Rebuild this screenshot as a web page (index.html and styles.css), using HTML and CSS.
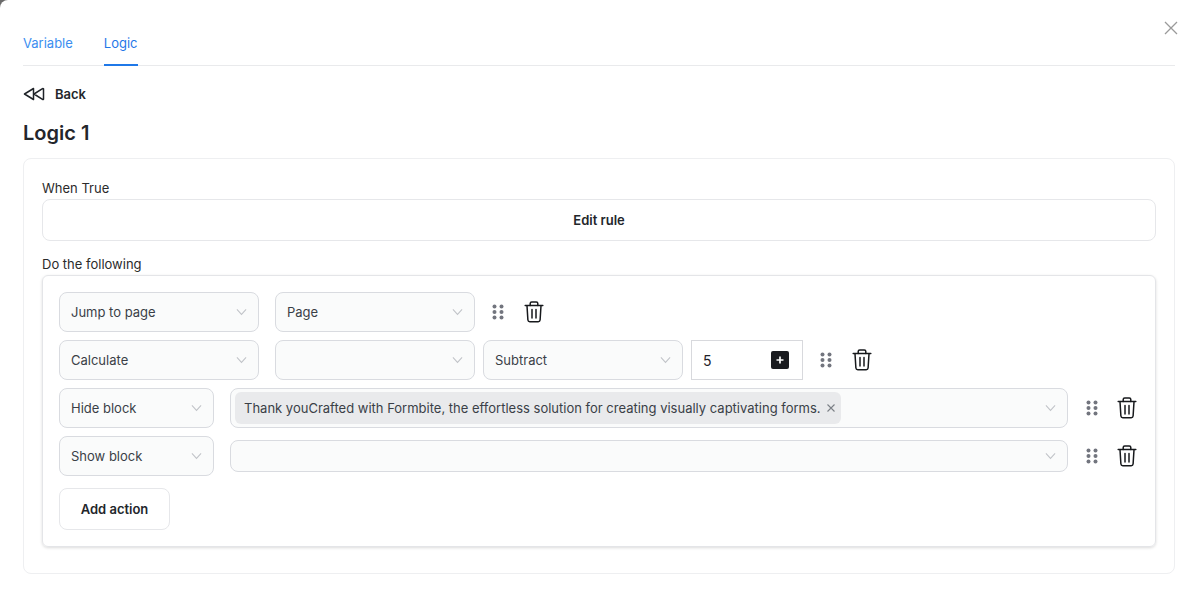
FILE: index.html
```html
<!DOCTYPE html>
<html lang="en">
<head>
<meta charset="utf-8">
<title>Logic</title>
<link rel="stylesheet" href="styles.css">
</head>
<body>
<svg width="0" height="0" class="defs">
  <defs>
    <symbol id="chev" viewBox="0 0 12 8"><path d="M1 1.2 6 6.6 11 1.2" fill="none" stroke="currentColor" stroke-width="1.1"/></symbol>
    <symbol id="grip" viewBox="0 0 12 16"><circle cx="2.5" cy="2.5" r="2"/><circle cx="9.5" cy="2.5" r="2"/><circle cx="2.5" cy="8" r="2"/><circle cx="9.5" cy="8" r="2"/><circle cx="2.5" cy="13.5" r="2"/><circle cx="9.5" cy="13.5" r="2"/></symbol>
    <symbol id="trash" viewBox="0 0 20 22"><g fill="none" stroke="currentColor" stroke-width="1.5" stroke-linecap="round" stroke-linejoin="round"><path d="M1.2 4.6h17.6"/><path d="M6.2 4.4V2.600c0-.9.6-1.500 1.500-1.500h4.600c.9 0 1.500.6 1.500 1.500v1.800"/><path d="M3 4.800l.9 14.200c.1 1 .8 1.800 1.900 1.800h8.400c1.100 0 1.800-.8 1.900-1.800L17 4.800"/><path d="M8 8.600v8.400M12 8.600v8.400"/></g></symbol>
  </defs>
</svg>
<main class="modal">
  <svg class="close" width="14" height="14" viewBox="0 0 14 14"><path d="M1 1l12 12M13 1L1 13" stroke="#9a9a9a" stroke-width="1.3" fill="none"/></svg>
  <nav class="tabs">
    <a class="tab">Variable</a>
    <a class="tab active">Logic</a>
  </nav>
  <div class="back">
    <svg width="22" height="14" viewBox="0 0 22 14"><g fill="none" stroke="#1f2328" stroke-width="1.5" stroke-linejoin="round"><path d="M10.500 1.500 1.500 7l9 5.500z"/><path d="M20.500 1.800c-.3-.3-.7-.3-1-.1L11 7l8.500 5.300c.3.200.7.200 1-.1z"/></g></svg>
    <span>Back</span>
  </div>
  <h1 class="title">Logic 1</h1>
  <section class="card">
    <div class="label">When True</div>
    <button class="edit">Edit rule</button>
    <div class="label second">Do the following</div>
    <div class="actions">
      <div class="row">
        <div class="sel w200"><span>Jump to page</span><svg class="chev"><use href="#chev"/></svg></div>
        <div class="sel w200"><span>Page</span><svg class="chev"><use href="#chev"/></svg></div>
        <svg class="grip"><use href="#grip"/></svg>
        <svg class="trash"><use href="#trash"/></svg>
      </div>
      <div class="row">
        <div class="sel w200"><span>Calculate</span><svg class="chev"><use href="#chev"/></svg></div>
        <div class="sel w200"><span></span><svg class="chev"><use href="#chev"/></svg></div>
        <div class="sel w200 tight"><span>Subtract</span><svg class="chev"><use href="#chev"/></svg></div>
        <div class="num tight"><span>5</span><i class="plus"><svg width="8" height="8" viewBox="0 0 8 8"><path d="M4 .5v7M.5 4h7" stroke="#fff" stroke-width="1.700"/></svg></i></div>
        <svg class="grip"><use href="#grip"/></svg>
        <svg class="trash"><use href="#trash"/></svg>
      </div>
      <div class="row">
        <div class="sel w155"><span>Hide block</span><svg class="chev"><use href="#chev"/></svg></div>
        <div class="multi">
          <span class="chip">Thank youCrafted with Formbite, the effortless solution for creating visually captivating forms.<svg width="8" height="8" viewBox="0 0 8 8"><path d="M.5.500l7 7M7.500.500l-7 7" stroke="#7b7f86" stroke-width="1.100" fill="none"/></svg></span>
          <svg class="chev"><use href="#chev"/></svg>
        </div>
        <svg class="grip wide"><use href="#grip"/></svg>
        <svg class="trash"><use href="#trash"/></svg>
      </div>
      <div class="row">
        <div class="sel w155"><span>Show block</span><svg class="chev"><use href="#chev"/></svg></div>
        <div class="multi empty"><svg class="chev"><use href="#chev"/></svg></div>
        <svg class="grip wide"><use href="#grip"/></svg>
        <svg class="trash"><use href="#trash"/></svg>
      </div>
      <button class="add">Add action</button>
    </div>
  </section>
</main>
</body>
</html>
```
FILE: styles.css
```css
* { box-sizing: border-box; }
html, body { margin: 0; height: 100%; background: #6b6b6b; overflow: hidden; }
body { font-family: Inter, "Noto Sans", sans-serif; color: #1f2328; }
.defs { position: absolute; }
.modal { position: relative; height: 610px; background: #fff; border-radius: 8px 0 0 0; padding: 23px 16px 0 23px; }
.close { position: absolute; left: 1164px; top: 21px; }
.tabs { display: flex; gap: 31px; height: 43px; border-bottom: 1px solid #e9eaec; }
.tab { font-size: 13px; line-height: 41px; height: 43px; color: #3b8ef0; padding: 0; }
.tab.active { color: #1f78e8; border-bottom: 2px solid #1f78e8; }
.back { display: flex; align-items: center; gap: 10px; height: 16px; margin-top: 20px; font-size: 13px; font-weight: 600; color: #23262b; }
.title { margin: 18px 0 0; font-size: 20px; line-height: 26px; font-weight: 600; color: #23262b; }
.card { margin-top: 12px; height: 416px; border: 1px solid #eeeff1; border-radius: 8px; padding: 21px 18px 0; }
.label { font-size: 13px; line-height: 16px; height: 19px; color: #2b2b2b; }
.label.second { margin-top: 15px; height: 19px; }
.edit { display: block; width: 100%; height: 42px; background: #fff; border: 1px solid #e6e7ea; border-radius: 8px; font: 600 13px Inter, sans-serif; color: #23262b; }
.actions { height: 272px; border: 1px solid #e4e5e8; border-radius: 6px; padding: 16px; box-shadow: 0 1px 3px rgba(0,0,0,.14); display: flex; flex-direction: column; gap: 8px; }
.row { display: flex; align-items: center; height: 40px; gap: 16px; }
.sel, .multi { display: flex; align-items: center; justify-content: space-between; flex: none; font-size: 13px; color: #3a3f47; background-color: #fafbfb; background-image: radial-gradient(#f0f2f3 .6px, transparent .7px); background-size: 4px 4px; border: 1px solid #d9dbe0; }
.sel { height: 40px; border-radius: 8px; padding: 0 11px; }
.w200 { width: 200px; }
.w155 { width: 155px; }
.tight { margin-left: -8px; }
.chev { width: 11px; height: 8px; color: #c0c3c8; flex: none; }
.multi { width: 838px; height: 40px; border-radius: 8px; padding: 3px 11px 3px 4px; }
.multi.empty { height: 32px; justify-content: flex-end; }
.chip { display: flex; align-items: center; height: 32px; padding: 0 6px 0 9px; gap: 6px; border-radius: 6px; background: #e9eaec; font-size: 13px; white-space: nowrap; }
.num { display: flex; align-items: center; justify-content: space-between; width: 112px; height: 40px; padding: 0 13px 0 11px; border: 1px solid #d8d9dd; font-size: 14px; background: #fff; }
.plus { display: flex; align-items: center; justify-content: center; width: 18px; height: 18px; border-radius: 2px; background: #1a1c20; }
.grip { width: 12px; height: 16px; fill: #72757e; flex: none; margin-left: 1px; }
.grip.wide { margin-left: 2px; }
.trash { width: 20px; height: 22px; color: #17191c; flex: none; margin-left: 4px; }
.grip.wide + .trash { margin-left: 3px; }
.add { width: 111px; height: 42px; margin-top: 4px; background: #fff; border: 1px solid #e6e7ea; border-radius: 8px; font: 600 13px Inter, sans-serif; color: #23262b; }
```
